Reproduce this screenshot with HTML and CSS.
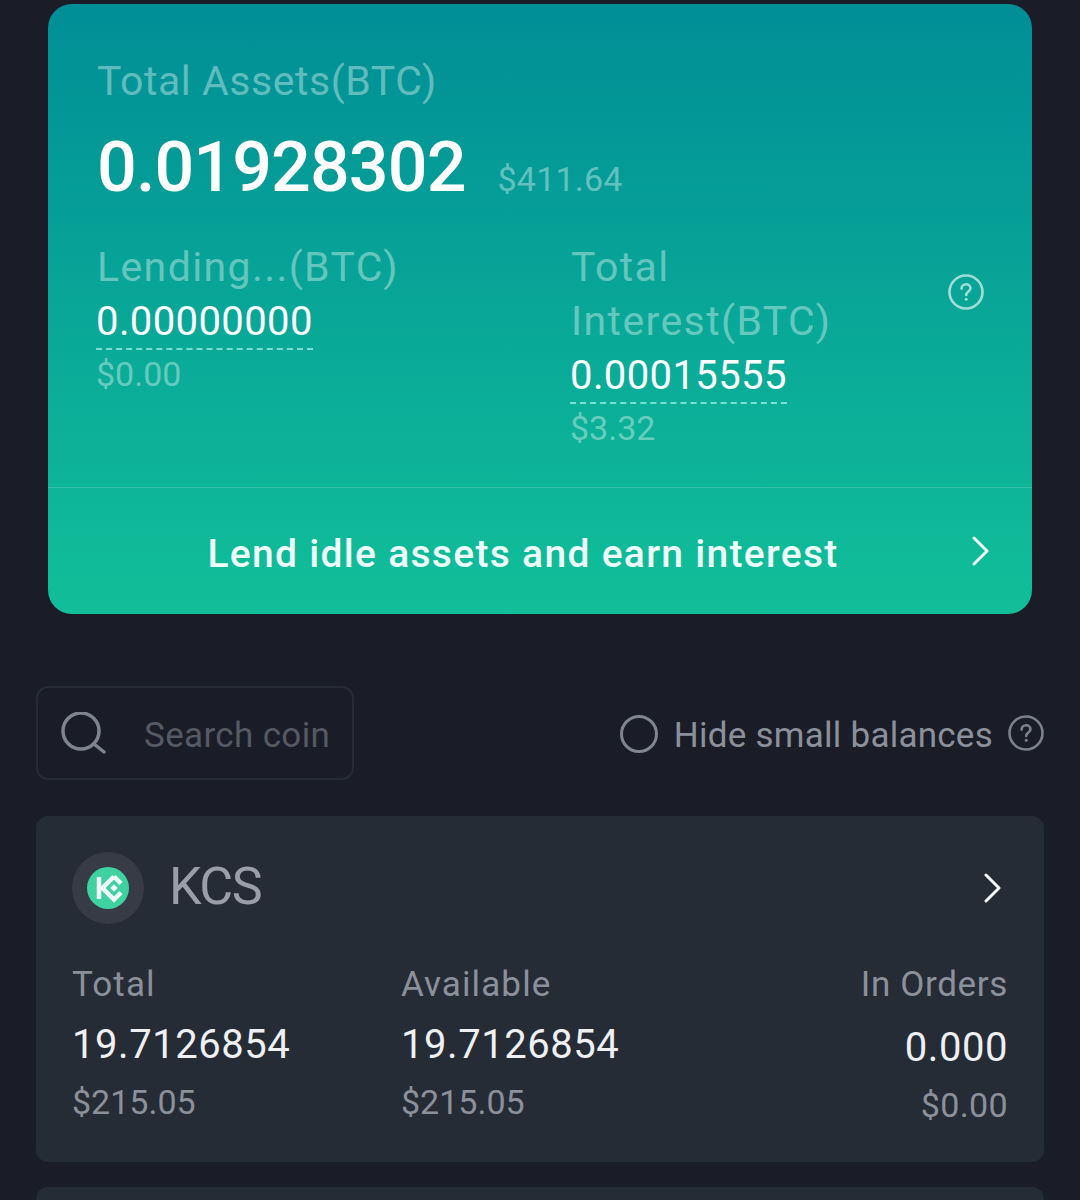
FILE: index.html
```html
<!DOCTYPE html>
<html lang="en">
<head>
<meta charset="utf-8">
<title>Lending assets</title>
<link rel="stylesheet" href="styles.css">
</head>
<body>
<main class="page">
  <section class="hero">
    <div class="hero-main">
      <div class="label total-label">Total Assets(BTC)</div>
      <div class="total-row">
        <span class="total-value">0.01928302</span>
        <span class="total-usd">$411.64</span>
      </div>
      <div class="stats">
        <div class="stat stat-lending">
          <div class="label">Lending...(BTC)</div>
          <div class="stat-value">0.00000000</div>
          <div class="stat-usd">$0.00</div>
        </div>
        <div class="stat stat-interest">
          <div class="label">Total<br>Interest(BTC)</div>
          <div class="stat-value">0.00015555</div>
          <div class="stat-usd">$3.32</div>
        </div>
        <svg class="help help-hero" viewBox="0 0 36 36" aria-hidden="true">
          <circle cx="18" cy="18" r="16.5"/>
          <path d="M13.6 14.6c0-2.6 2-4.3 4.500-4.300s4.400 1.600 4.400 3.900c0 3.300-4.300 3.400-4.300 6.800"/>
          <circle class="dot" cx="18.200" cy="25.200" r="1.500"/>
        </svg>
      </div>
    </div>
    <div class="hero-cta">
      <span class="cta-text">Lend idle assets and earn interest</span>
      <svg class="chevron chevron-cta" viewBox="0 0 18 30" aria-hidden="true"><path d="M2 2l13 13L2 28"/></svg>
    </div>
  </section>

  <section class="toolbar">
    <div class="search">
      <svg class="search-icon" viewBox="0 0 46 42" aria-hidden="true">
        <circle cx="20" cy="19" r="18"/>
        <path d="M33 32l10 8"/>
      </svg>
      <span class="search-text">Search coin</span>
    </div>
    <div class="hide-small">
      <span class="radio"></span>
      <span class="hide-text">Hide small balances</span>
      <svg class="help help-tool" viewBox="0 0 36 36" aria-hidden="true">
        <circle cx="18" cy="18" r="16.500"/>
        <path d="M13.600 14.600c0-2.600 2-4.300 4.500-4.300s4.400 1.600 4.400 3.900c0 3.300-4.300 3.400-4.300 6.800"/>
        <circle class="dot" cx="18.200" cy="25.200" r="1.500"/>
      </svg>
    </div>
  </section>

  <article class="coin">
    <header class="coin-head">
      <div class="coin-logo">
        <svg viewBox="0 0 42 42" aria-hidden="true">
          <circle class="logo-disc" cx="21" cy="21" r="21"/>
          <path class="logo-mark" d="M12 10v22M27 9.500L15.500 21 27 32.500 34 25.500M27 9.500l7 7"/>
          <rect class="logo-dot" x="24.300" y="18.300" width="5.400" height="5.400" transform="rotate(45 27 21)"/>
        </svg>
      </div>
      <span class="coin-name">KCS</span>
      <svg class="chevron chevron-coin" viewBox="0 0 18 30" aria-hidden="true"><path d="M2 2l13 13L2 28"/></svg>
    </header>
    <div class="coin-grid">
      <div class="cell">
        <div class="cell-label">Total</div>
        <div class="cell-value">19.7126854</div>
        <div class="cell-usd">$215.05</div>
      </div>
      <div class="cell">
        <div class="cell-label">Available</div>
        <div class="cell-value">19.7126854</div>
        <div class="cell-usd">$215.05</div>
      </div>
      <div class="cell cell-right">
        <div class="cell-label">In Orders</div>
        <div class="cell-value">0.000</div>
        <div class="cell-usd">$0.00</div>
      </div>
    </div>
  </article>
  <div class="coin coin-next"></div>
</main>
</body>
</html>
```

FILE: styles.css
```css
* { box-sizing: border-box; }

html, body {
  margin: 0;
  height: 1200px;
  overflow: hidden;
}

body {
  background: #1a1d27;
  font-family: Roboto, "Liberation Sans", sans-serif;
  color: #fff;
}

.page {
  padding: 4px 36px 0;
}

.hero {
  margin: 0 12px;
  height: 610px;
  border-radius: 24px;
  background: linear-gradient(180deg, #008e96 0%, #11bf99 100%);
  display: flex;
  flex-direction: column;
}

.hero-main {
  height: 484px;
  padding: 58px 48px 0 48px;
  border-bottom: 1px solid rgba(255, 255, 255, 0.16);
}

.label {
  font-size: 41px;
  line-height: 54px;
  letter-spacing: 1.4px;
  color: rgba(255, 255, 255, 0.39);
  margin-top: -4px;
}

.total-label {
  line-height: 46px;
  letter-spacing: 0.55px;
  margin-left: 1px;
}

.total-row {
  display: flex;
  align-items: baseline;
  margin-top: 21px;
  height: 84px;
  margin-left: 1px;
}

.total-value {
  font-size: 70px;
  line-height: 84px;
  font-weight: 500;
  letter-spacing: -0.9px;
}

.total-usd {
  margin-left: 32px;
  font-size: 34px;
  letter-spacing: 0.2px;
  color: rgba(255, 255, 255, 0.39);
}

.stats {
  display: flex;
  align-items: flex-start;
  margin-top: 35px;
  position: relative;
}

.stat {
  flex: none;
}

.stat .label {
  margin-left: 1px;
}

.stat-lending {
  width: 474px;
}

.stat-interest {
  width: 300px;
}

.stat-value {
  display: inline-block;
  margin-top: 3px;
  font-size: 40px;
  line-height: 50px;
  letter-spacing: 0.4px;
  height: 53px;
  padding-bottom: 3px;
  border-bottom: 2px dashed rgba(200, 255, 250, 0.6);
  color: #fff;
}

.stat-usd {
  font-size: 34px;
  line-height: 48px;
  margin-top: 0;
  color: rgba(255, 255, 255, 0.39);
}

.help {
  fill: none;
  stroke-width: 2.600;
  stroke-linecap: round;
  flex: none;
}

.help .dot {
  stroke: none;
}

.help-hero {
  position: absolute;
  right: 0;
  top: 30px;
  width: 36px;
  height: 36px;
  stroke: rgba(255, 255, 255, 0.62);
}

.help-hero .dot {
  fill: rgba(255, 255, 255, 0.62);
}

.hero-cta {
  flex: 1;
  display: flex;
  align-items: center;
  justify-content: center;
  position: relative;
  padding-top: 6px;
}

.cta-text {
  font-size: 39px;
  font-weight: 500;
  letter-spacing: 1.3px;
  color: #eefdf9;
  margin-left: -34px;
}

.chevron {
  fill: none;
  stroke: #f2f7f7;
  stroke-width: 3;
  stroke-linecap: round;
  stroke-linejoin: round;
  width: 18px;
  height: 30px;
}

.chevron-cta {
  position: absolute;
  right: 42px;
  top: 48px;
}

.toolbar {
  margin-top: 72px;
  display: flex;
  align-items: center;
  justify-content: space-between;
  height: 94px;
}

.search {
  width: 318px;
  height: 94px;
  border: 2px solid #272b37;
  border-radius: 12px;
  display: flex;
  align-items: center;
  padding-left: 23px;
}

.search-icon {
  width: 46px;
  height: 42px;
  fill: none;
  stroke: #7f838e;
  stroke-width: 3.500;
  stroke-linecap: round;
}

.search-text {
  margin: 5px 0 0 37px;
  font-size: 35px;
  letter-spacing: 0.35px;
  color: #555963;
}

.hide-small {
  display: flex;
  align-items: center;
}

.radio {
  width: 38px;
  height: 38px;
  margin-top: 2px;
  border: 3px solid #81858f;
  border-radius: 50%;
}

.hide-text {
  margin: 5px 0 0 16px;
  font-size: 35px;
  letter-spacing: 0.25px;
  color: #8c909b;
}

.help-tool {
  margin-left: 15px;
  width: 36px;
  height: 36px;
  stroke: #7c808a;
}

.help-tool .dot {
  fill: #7c808a;
}

.coin {
  margin-top: 36px;
  height: 346px;
  background: #262c36;
  border-radius: 12px;
  padding: 36px 36px 0;
}

.coin-next {
  margin-top: 25px;
  height: 60px;
}

.coin-head {
  display: flex;
  align-items: center;
  height: 72px;
}

.coin-logo {
  width: 72px;
  height: 72px;
  border-radius: 50%;
  background: #373b45;
  display: flex;
  align-items: center;
  justify-content: center;
}

.coin-logo svg {
  width: 42px;
  height: 42px;
}

.logo-disc {
  fill: #3fd2a0;
}

.logo-mark {
  fill: none;
  stroke: #f2fbf8;
  stroke-width: 4.500;
  stroke-linejoin: miter;
}

.logo-dot {
  fill: #f2fbf8;
}

.coin-name {
  margin: 0 0 3px 25px;
  font-size: 52px;
  letter-spacing: -1.5px;
  color: #9a9ea9;
}

.chevron-coin {
  margin-left: auto;
  margin-right: 6px;
}

.coin-grid {
  display: grid;
  grid-template-columns: 329px 1fr auto;
  margin-top: 36px;
}

.cell-label {
  font-size: 35px;
  line-height: 48px;
  margin-top: 1px;
  letter-spacing: 1.1px;
  color: #8c909b;
}

.cell-value {
  font-size: 40px;
  line-height: 52px;
  letter-spacing: 0.55px;
  margin-top: 10px;
  color: #eef0f4;
}

.cell-usd {
  font-size: 34px;
  line-height: 48px;
  margin-top: 7px;
  color: #8c909b;
}

.cell-right {
  text-align: right;
}

.cell-right .cell-label {
  letter-spacing: 0.65px;
}

.cell-right .cell-value {
  margin-top: 13px;
}

.cell-right .cell-usd {
  letter-spacing: 0.35px;
}
```
